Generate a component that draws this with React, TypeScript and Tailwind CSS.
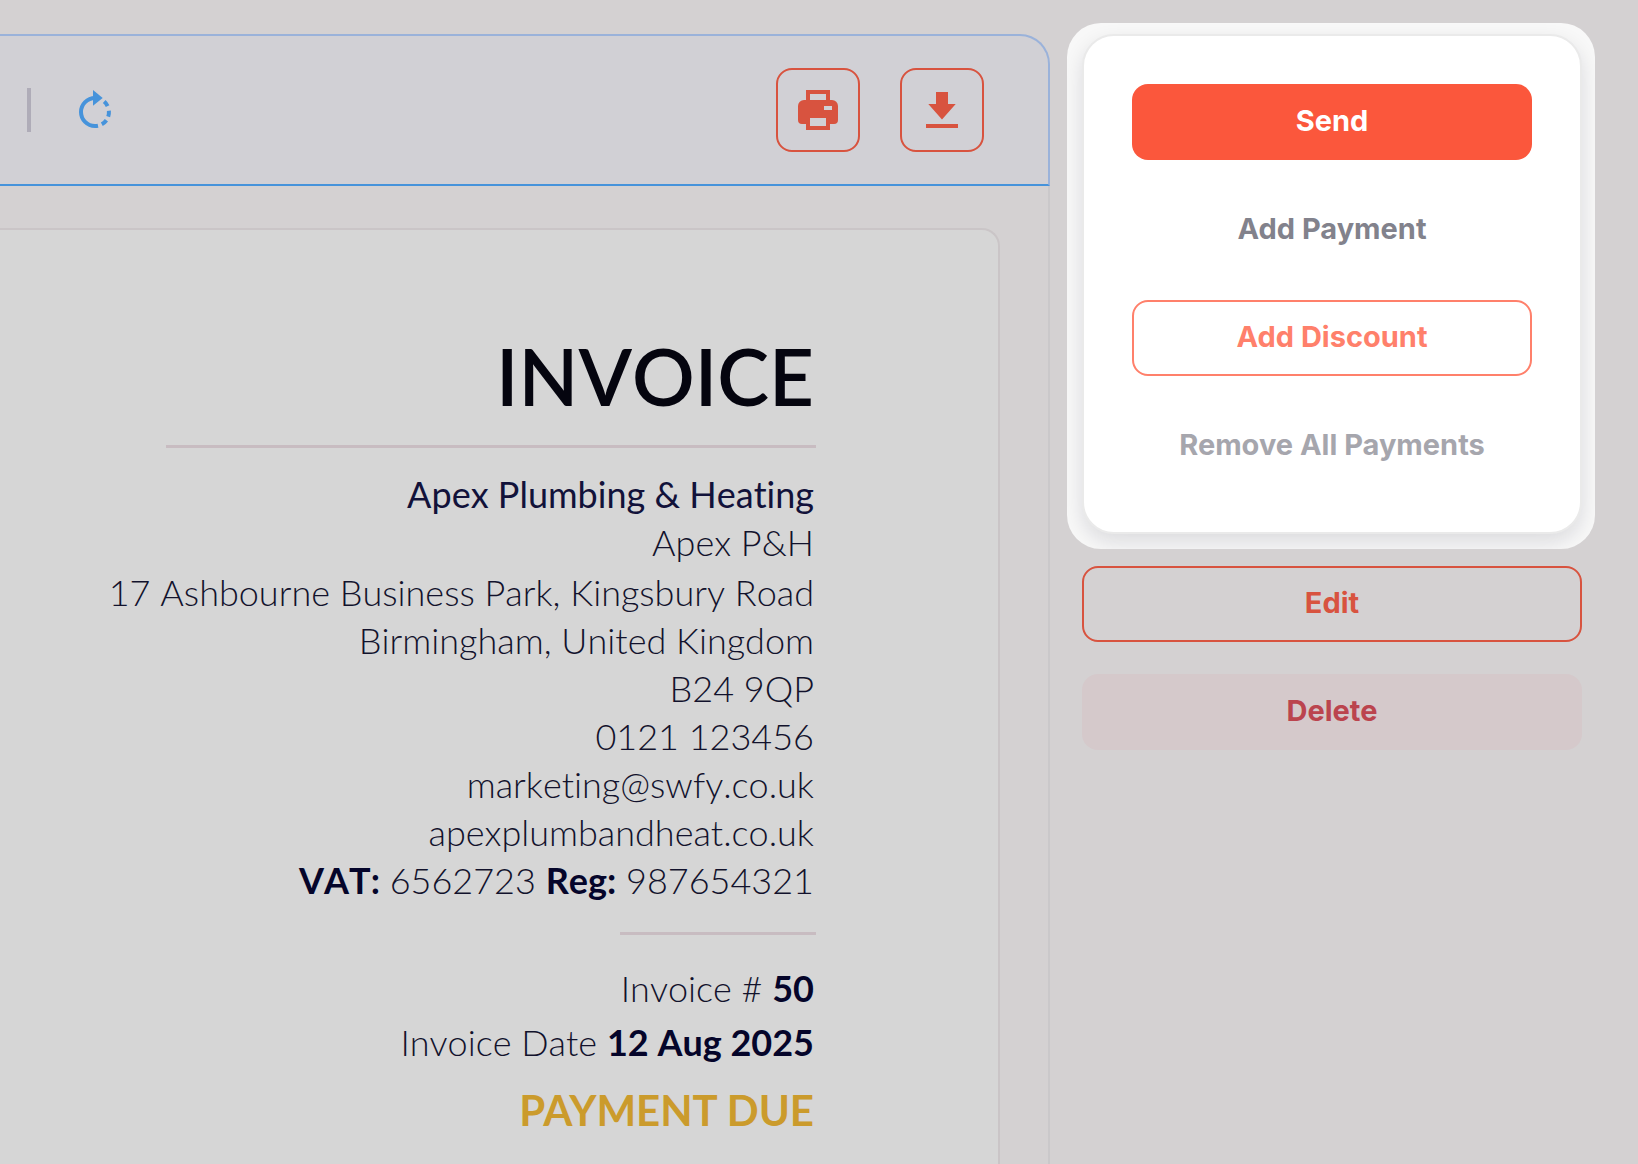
import type { ReactNode } from 'react';

const companyLines = [
  'Birmingham, United Kingdom',
  'B24 9QP',
  '0121 123456',
  'marketing@swfy.co.uk',
  'apexplumbandheat.co.uk'
];

function RotateIcon() {
  return (
    <svg viewBox="0 2 40 40" className="w-10 h-10" fill="none" aria-hidden="true">
      <path d="M20 10A14 14 0 0 0 20 38Q21.5 38 23 37.7" stroke="currentColor" strokeWidth="4" />
      <path
        d="M29.2 13.6A14 14 0 0 1 32.6 18.2M33.9 22.8A14 14 0 0 1 33.2 28.6M31.4 32.2A14 14 0 0 1 26.8 36.2"
        stroke="currentColor"
        strokeWidth="4"
      />
      <path d="M18 2L27.7 10L18 17.7Z" fill="currentColor" />
    </svg>
  );
}

function PrintIcon() {
  return (
    <svg viewBox="0 0 20 20" className="w-10 h-10" fill="currentColor" aria-hidden="true">
      <path
        fillRule="evenodd"
        d="M4 0H16V5H17A3 3 0 0 1 20 8V15A2 2 0 0 1 18 17H16V20H4V17H2A2 2 0 0 1 0 15V8A3 3 0 0 1 3 5H4ZM6 2V5H14V2ZM13 8V10H17V8ZM6 14V18H14V14Z"
      />
    </svg>
  );
}

function DownloadIcon() {
  return (
    <svg viewBox="0 0 40 40" className="w-10 h-10" fill="currentColor" aria-hidden="true">
      <path d="M14 2H26V14H33.7L20 29.5L6.3 14H14ZM4 34H36V38H4Z" />
    </svg>
  );
}

function IconButton({ label, children }: { label: string; children: ReactNode }) {
  return (
    <button
      type="button"
      aria-label={label}
      className="flex h-21 w-21 items-center justify-center rounded-2xl border-2 border-[#d8533f] text-[#d8533f]"
    >
      {children}
    </button>
  );
}

function ActionButton({ className, children }: { className: string; children: ReactNode }) {
  return (
    <button
      type="button"
      className={`flex h-19 w-full items-center justify-center rounded-2xl pb-[2px] text-[29px] font-bold ${className}`}
    >
      {children}
    </button>
  );
}

function Toolbar() {
  return (
    <header className="flex h-38 items-center rounded-tr-[30px] border-t-2 border-r-2 border-b-2 border-t-[#9ab2da] border-r-[#9ab2da] border-b-[#4693db] bg-[#d1d0d5] pr-16 pl-[27px]">
      <div className="h-11 w-1 bg-[#afacb8]" />
      <button type="button" aria-label="Rotate" className="ml-11 text-[#4693db]">
        <RotateIcon />
      </button>
      <div className="ml-auto flex gap-10">
        <IconButton label="Print">
          <PrintIcon />
        </IconButton>
        <IconButton label="Download">
          <DownloadIcon />
        </IconButton>
      </div>
    </header>
  );
}

function InvoicePaper() {
  return (
    <article className="mt-[42px] mr-12 flex flex-1 flex-col items-end rounded-tr-[18px] border-t-2 border-r-2 border-[#cac5c7] bg-[#d6d6d6] pr-[182px] text-right font-['Lato',sans-serif] text-[36px] leading-[48px] font-light whitespace-nowrap text-[#12122c] [font-kerning:none] [font-variant-ligatures:none]">
      <h1 className="mt-[98px] pr-[2px] text-[78px] leading-24 font-semibold text-[#05050f]">INVOICE</h1>
      <hr className="mt-[21px] w-[650px] border-t-3 border-[#c8bcc1]" />
      <div className="mt-[22px] pr-[2px]">
        <p className="font-normal text-[#12123a]">Apex Plumbing &amp; Heating</p>
        <p>Apex P&amp;H</p>
        <p className="mt-[2px]">17 Ashbourne Business Park, Kingsbury Road</p>
        {companyLines.map((line) => (
          <p key={line}>{line}</p>
        ))}
        <p>
          <strong className="font-bold text-[#05052a]">VAT:</strong> 6562723{' '}
          <strong className="font-bold text-[#05052a]">Reg:</strong> 987654321
        </p>
      </div>
      <hr className="mt-7 w-[196px] border-t-3 border-[#c8bcc1]" />
      <div className="mt-[29px] flex flex-col gap-[6px] pr-[2px]">
        <p>
          Invoice # <strong className="font-bold text-[#05052a]">50</strong>
        </p>
        <p>
          Invoice Date <strong className="font-bold text-[#05052a]">12 Aug 2025</strong>
        </p>
      </div>
      <p className="mt-5 pr-[2px] text-[42px] font-bold text-[#cb9b2c] [font-kerning:normal]">PAYMENT DUE</p>
    </article>
  );
}

function ActionsPanel() {
  return (
    <aside className="w-[588px] shrink-0 pt-[23px] pr-[43px] pl-[17px] font-['Inter',sans-serif]">
      <div className="overflow-hidden rounded-[34px] bg-[#f8f8f8] pt-[11px] pr-[13px] pb-[15px] pl-[15px]">
        <div className="flex flex-col gap-8 rounded-[32px] border-2 border-[#eaeaea] bg-white p-12 shadow-[0_8px_20px_rgba(20,20,40,0.12)]">
          <ActionButton className="bg-[#fb573c] text-white">Send</ActionButton>
          <ActionButton className="text-[#82828c]">Add Payment</ActionButton>
          <ActionButton className="border-2 border-[#ff806b] text-[#ff806b]">Add Discount</ActionButton>
          <ActionButton className="text-[#a6a6ad]">Remove All Payments</ActionButton>
        </div>
      </div>
      <div className="mt-[17px] flex flex-col gap-8 pr-[13px] pl-[15px]">
        <ActionButton className="border-2 border-[#d8533f] text-[#d8533f]">Edit</ActionButton>
        <ActionButton className="bg-[#d5c9cb] text-[#bb444e]">Delete</ActionButton>
      </div>
    </aside>
  );
}

export default function App() {
  return (
    <div className="flex min-h-screen bg-[#d4d1d2]">
      <main className="flex min-w-0 flex-1 flex-col pt-[34px]">
        <Toolbar />
        <div className="flex flex-1 flex-col border-r-2 border-[#cac8ca]">
          <InvoicePaper />
        </div>
      </main>
      <ActionsPanel />
    </div>
  );
}
